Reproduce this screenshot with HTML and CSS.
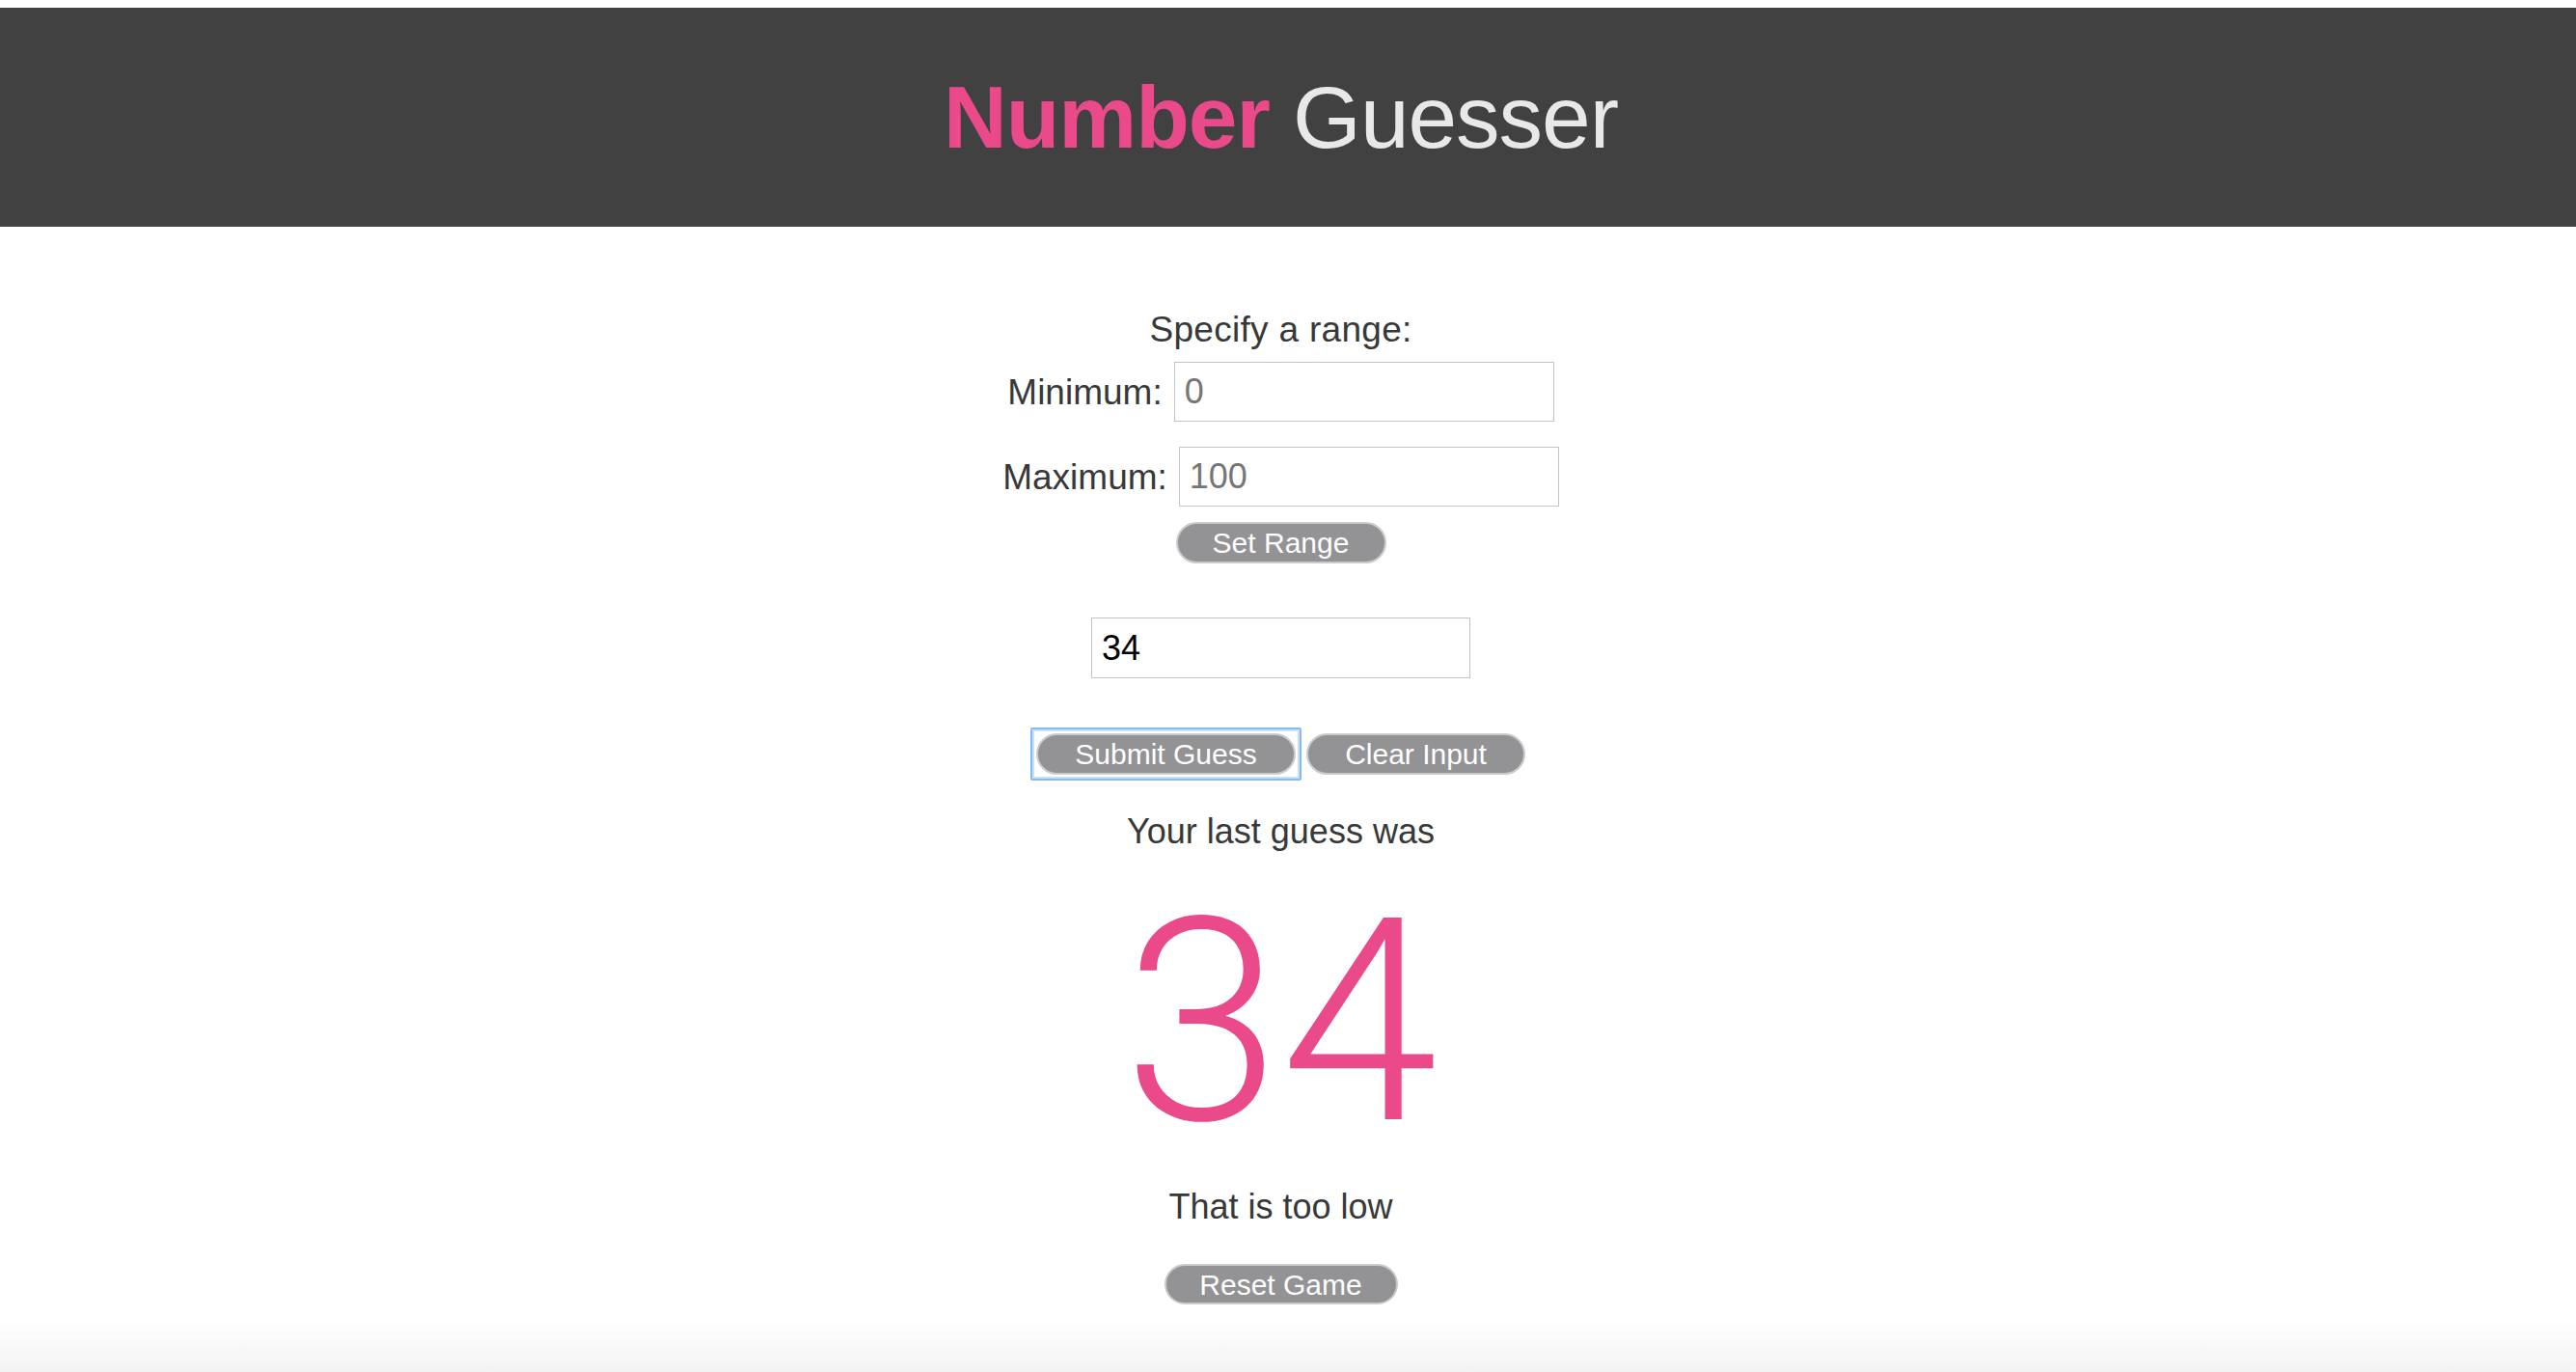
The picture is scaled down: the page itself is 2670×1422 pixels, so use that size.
FILE: index.html
```html
<!DOCTYPE html>
<html lang="en">
<head>
<meta charset="utf-8">
<title>Number Guesser</title>
<link rel="stylesheet" href="styles.css">
</head>
<body>
<header class="site-header">
  <h1 class="site-title"><span class="title-strong">Number</span> Guesser</h1>
</header>
<main class="game">
  <section class="range">
    <p class="range-title">Specify a range:</p>
    <div class="range-row">
      <label class="range-label" for="min">Minimum:</label>
      <input class="text-input range-input" id="min" type="text" placeholder="0">
    </div>
    <div class="range-row range-row-max">
      <label class="range-label" for="max">Maximum:</label>
      <input class="text-input range-input" id="max" type="text" placeholder="100">
    </div>
    <button class="pill-button set-range" type="button">Set Range</button>
  </section>
  <input class="text-input guess-input" type="text" value="34">
  <div class="guess-buttons">
    <button class="pill-button is-focused" type="button">Submit Guess</button>
    <button class="pill-button" type="button">Clear Input</button>
  </div>
  <p class="last-label">Your last guess was</p>
  <p class="last-number">34</p>
  <p class="hint">That is too low</p>
  <button class="pill-button reset" type="button">Reset Game</button>
</main>
</body>
</html>
```
FILE: styles.css
```css
html {
  min-height: 100%;
  background: linear-gradient(to bottom, #ffffff 0, #ffffff 1365px, #f3f3f3 1422px);
}

body {
  margin: 0;
  font-family: "Helvetica Neue", Helvetica, "Liberation Sans", Arial, sans-serif;
  color: #383838;
}

.site-header {
  margin-top: 8px;
  height: 227px;
  background: #414141;
  display: flex;
  align-items: center;
  justify-content: center;
  padding-right: 15px;
}

.site-title {
  margin: 0;
  font-size: 91px;
  font-weight: 400;
  line-height: 1;
  color: #e8e8ea;
  letter-spacing: -1px;
}

.title-strong {
  color: #ea4a8a;
  font-weight: 700;
}

.game {
  display: flex;
  flex-direction: column;
  align-items: center;
  padding: 86px 15px 0 0;
}

.range {
  display: flex;
  flex-direction: column;
  align-items: center;
}

.range-title {
  margin: 0;
  font-size: 37px;
  line-height: 41px;
  letter-spacing: 0.3px;
}

.range-row {
  display: flex;
  align-items: center;
  gap: 12px;
  margin-top: 13px;
}

.range-row-max {
  margin-top: 26px;
}

.range-label {
  font-size: 37px;
  line-height: 41px;
}

.text-input {
  box-sizing: border-box;
  border: 1px solid #c3c3c3;
  border-radius: 0;
  background: #fff;
  font-family: "Helvetica Neue", Helvetica, "Liberation Sans", Arial, sans-serif;
  font-size: 36px;
  padding: 0 10px;
  margin: 0;
  outline: none;
}

.text-input::placeholder {
  color: #767676;
  opacity: 1;
}

.range-input {
  width: 394px;
  height: 62px;
}

.pill-button {
  box-sizing: border-box;
  position: relative;
  height: 43px;
  padding: 0 36px;
  border: 2px solid #cbcbcd;
  border-radius: 22px;
  background: #939396;
  color: #ffffff;
  font-family: "Helvetica Neue", Helvetica, "Liberation Sans", Arial, sans-serif;
  font-size: 30px;
  line-height: 37px;
  margin: 0;
}

.set-range {
  margin-top: 16px;
  width: 218px;
  padding: 0;
}

.guess-input {
  margin-top: 56px;
  width: 393px;
  height: 63px;
  color: #000;
}

.guess-buttons {
  display: flex;
  gap: 11px;
  margin-top: 57px;
}

.guess-buttons .pill-button:first-child {
  width: 269px;
  padding: 0;
}

.guess-buttons .pill-button:last-child {
  width: 227px;
  padding: 0;
}

.is-focused::after {
  content: "";
  position: absolute;
  top: -8px;
  right: -8px;
  bottom: -8px;
  left: -8px;
  border: 2px solid #84baf6;
  box-shadow: inset 0 0 0 2px #c8e0fb;
  border-radius: 2px;
  pointer-events: none;
}

.last-label {
  margin: 38px 0 0;
  font-size: 36px;
  line-height: 41px;
}

.last-number {
  margin: 31px 0 0;
  font-family: Roboto, "Liberation Sans", sans-serif;
  font-weight: 300;
  font-size: 294px;
  line-height: 1;
  color: #ea4a8a;
}

.hint {
  margin: 23px 0 0;
  font-size: 36px;
  line-height: 41px;
}

.reset {
  margin-top: 39px;
  width: 242px;
  height: 42px;
  padding: 0;
}
```
